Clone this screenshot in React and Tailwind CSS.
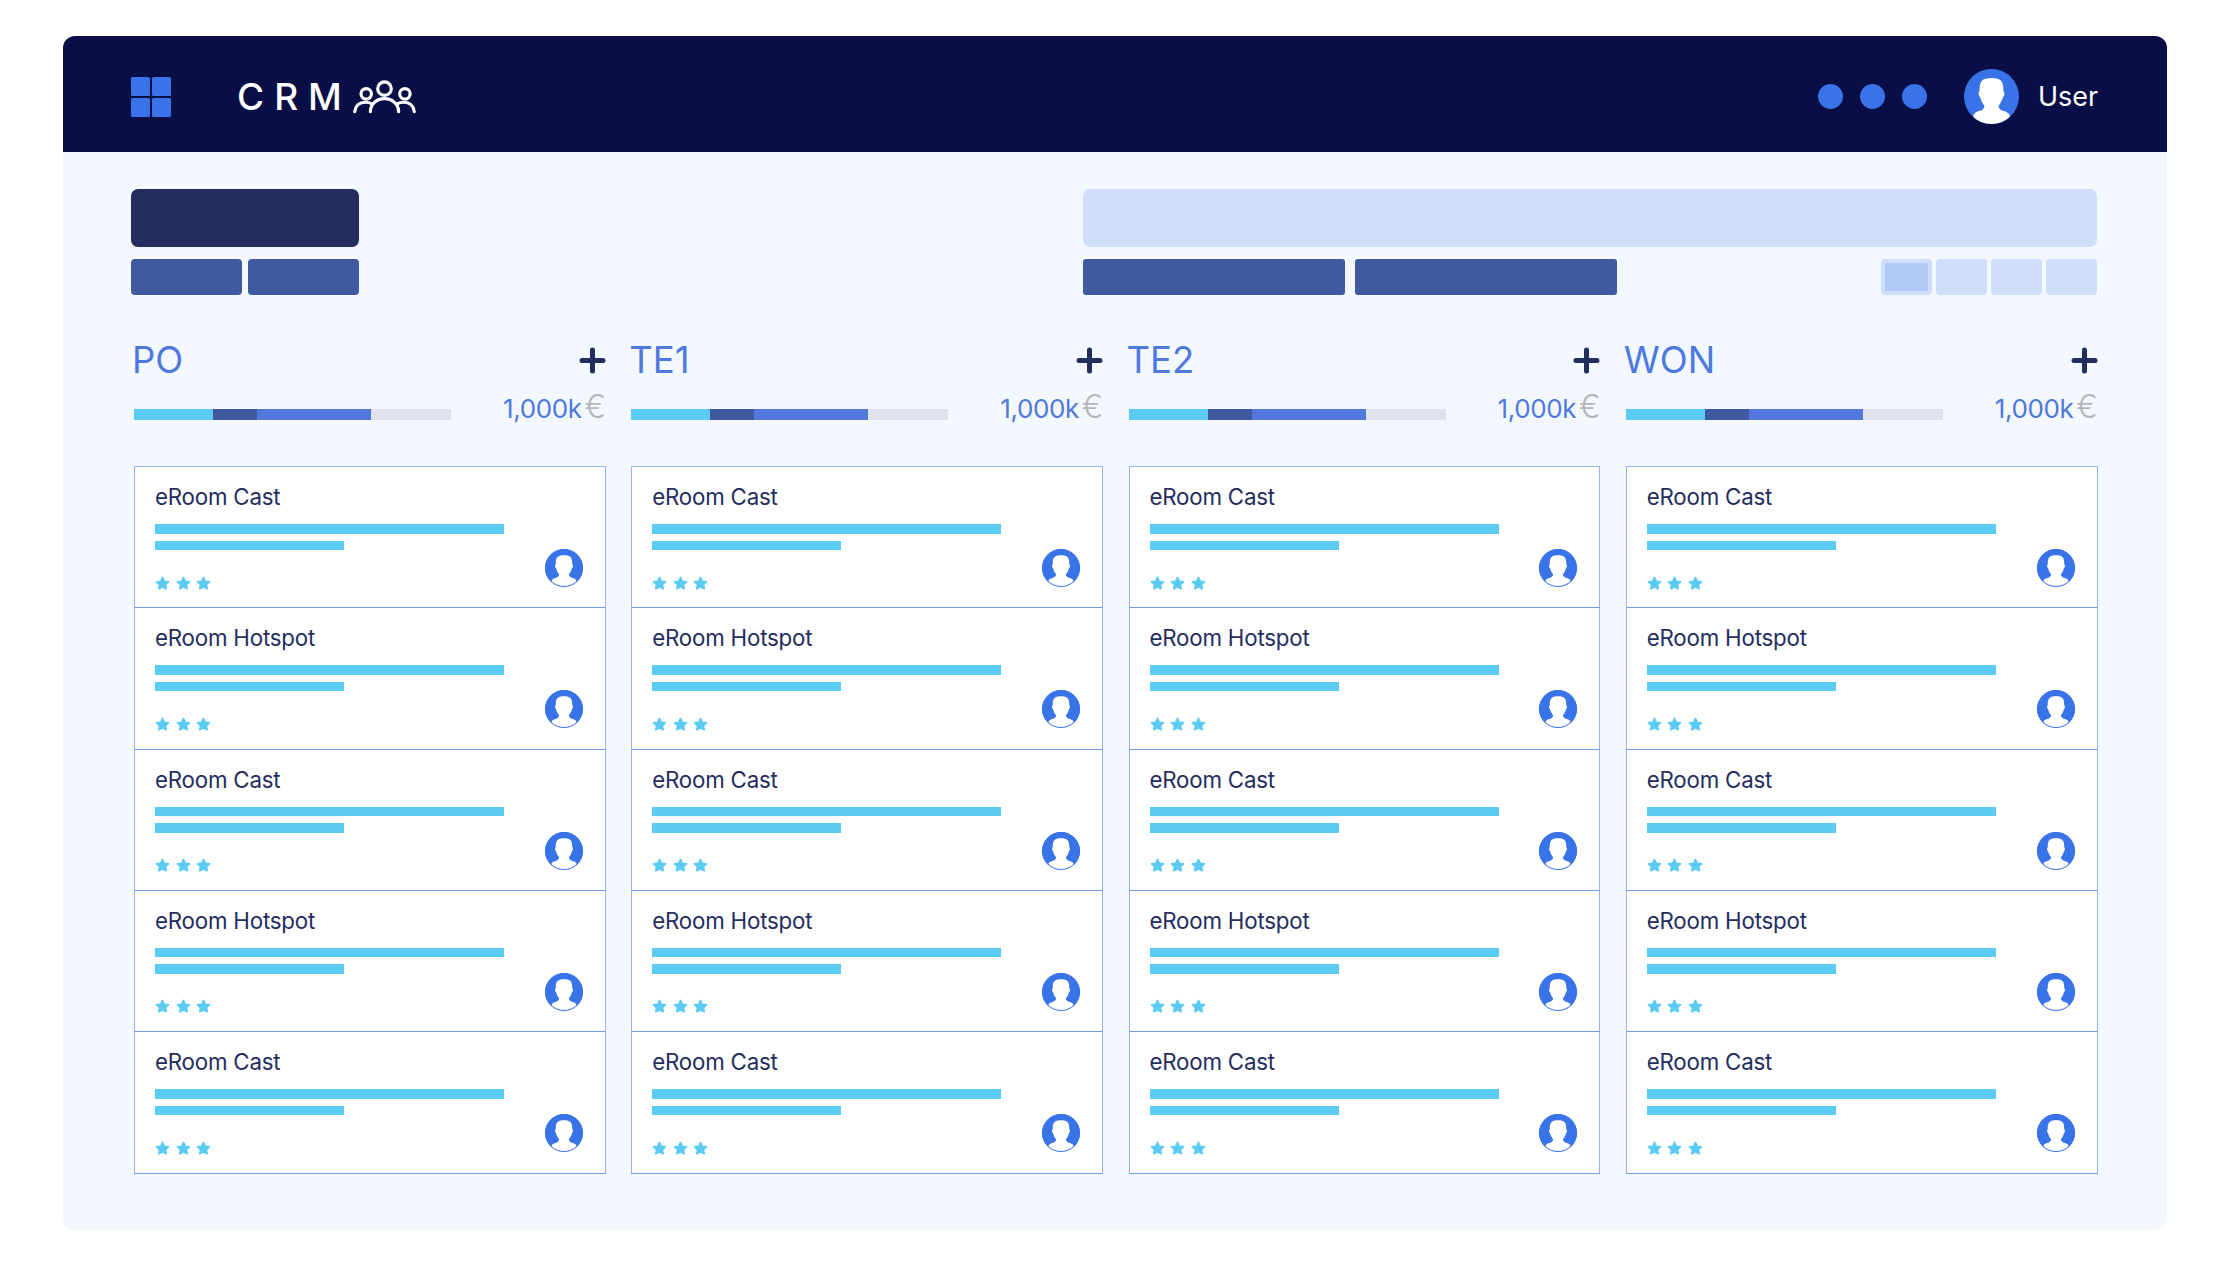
const FONT = "font-['Inter','Liberation_Sans',sans-serif]";

function Avatar({ size }) {
  return (
    <svg width={size} height={size} viewBox="0 0 55 55" className="shrink-0 block">
      <defs>
        <clipPath id={`av${size}`}><circle cx="27.5" cy="27.5" r="27.5" /></clipPath>
      </defs>
      <circle cx="27.5" cy="27.5" r="27.5" fill="#3874e8" />
      <g clipPath={`url(#av${size})`} fill="#fff">
        <path d="M15.500 22C15.500 12 18 9 27.500 9C37 9 39.500 12 39.500 22C41 23 40.500 27 39 28C38 32 36 35 34.500 37C35 40 37 41.500 40 42C43 43 45 44 45.500 46L46 56H9L9.500 46C10 44 12 43 15 42C18 41.500 20 40 20.500 37C19 35 17 32 16 28C14.500 27 14 23 15.500 22Z" />
      </g>
      {size < 50 && <circle cx="27.5" cy="27.5" r="26.8" fill="none" stroke="#3874e8" strokeWidth="1.400" />}
    </svg>
  );
}

function People() {
  return (
    <svg width="69" height="38" viewBox="0 0 66 36" fill="none" stroke="#fff" strokeWidth="3" strokeLinecap="round" className="block">
      <circle cx="33" cy="10" r="6.500" />
      <circle cx="15.500" cy="15" r="5" />
      <circle cx="52.500" cy="15" r="5" />
      <path d="M19.500 32c0-7 6-12.500 13.500-12.500S46.500 25 46.500 32" />
      <path d="M4.500 32c.5-5 4-9 10.500-9 2 0 4 .5 6 1.500" />
      <path d="M61.500 32c-.5-5-4-9-10.500-9-2 0-4 .5-6 1.500" />
    </svg>
  );
}

function Star() {
  return (
    <svg width="15" height="14" viewBox="0 0 24 23" className="block" fill="#5bcbf3" stroke="#5bcbf3" strokeWidth="3" strokeLinejoin="round">
      <path d="M12 2.500l2.900 6.200 6.800.8-5 4.600 1.300 6.700-6-3.300-6 3.300 1.300-6.700-5-4.600 6.800-.8z" />
    </svg>
  );
}

function Card({ name, last }) {
  return (
    <div className={`relative h-[141.250px] bg-white pl-[20px] pt-[17px] border-x border-x-[#93b4f3] ${last ? "" : "border-b border-b-[#7399e6]"}`}>
      <div className="text-[22.300px] leading-[26px] text-[#232d5e] tracking-[-0.2px]">{name}</div>
      <div className="mt-[14px] h-[9.500px] w-[349px] bg-[#5bcbf3]" />
      <div className="mt-[7px] h-[9.500px] w-[189px] bg-[#5bcbf3]" />
      <div className="mt-[25.500px] flex gap-[5.500px]">
        <Star /><Star /><Star />
      </div>
      <div className="absolute right-[22px] top-[82px]"><Avatar size={38} /></div>
    </div>
  );
}

function Column({ title }) {
  const rows = ["eRoom Cast", "eRoom Hotspot", "eRoom Cast", "eRoom Hotspot", "eRoom Cast"];
  return (
    <div>
      <div className="flex items-center justify-between h-[36px]">
        <div className="text-[36.500px] leading-[36px] font-normal text-[#4f78de] -ml-[2px]">{title}</div>
        <svg width="27" height="27" viewBox="0 0 27 27" className="block" stroke="#232d5e" strokeWidth="5" strokeLinecap="round">
          <path d="M13.500 3v21M3 13.500h21" />
        </svg>
      </div>
      <div className="mt-[14px] flex items-start justify-between h-[30px]">
        <div className="mt-[17px] flex h-[10.500px] w-[317px] bg-[#dfe2e8]">
          <div className="w-[79px] bg-[#5bcbf3]" />
          <div className="w-[44px] bg-[#4059a1]" />
          <div className="w-[114px] bg-[#5278de]" />
        </div>
        <div className="text-[26px] leading-[30px] font-normal text-[#4f78de] tracking-[-0.4px] flex items-baseline">
          1,000k<span className="ml-[3px] text-[32px] font-light text-[#b4b6b8]">€</span>
        </div>
      </div>
      <div className="mt-[44px] border-t border-t-[#93b4f3] border-b border-b-[#7399e6]">
        {rows.map((r, i) => <Card key={i} name={r} last={i === 4} />)}
      </div>
    </div>
  );
}

export default function App() {
  return (
    <div className={`${FONT} bg-white w-[2229px] h-[1266px] pt-[36px] pl-[62.500px]`}>
      <div className="w-[2104px] h-[1194px] rounded-[12px] overflow-hidden bg-[#f3f8fe]">
        <header className="h-[116px] bg-[#0a0e46] flex items-center pt-[5px] px-[68.500px]">
          <div className="grid grid-cols-[19px_19px] gap-[2px]">
            <div className="h-[19px] rounded-[1.500px] bg-[#3874e8]" />
            <div className="h-[19px] rounded-[1.500px] bg-[#3874e8]" />
            <div className="h-[19px] rounded-[1.500px] bg-[#3874e8]" />
            <div className="h-[19px] rounded-[1.500px] bg-[#3874e8]" />
          </div>
          <div className="ml-[66px] text-[37px] leading-[40px] font-medium text-white tracking-[10px]">CRM</div>
          <div className="-ml-[2px]"><People /></div>
          <div className="ml-auto flex gap-[17px]">
            <div className="w-[25px] h-[25px] rounded-full bg-[#3874e8]" />
            <div className="w-[25px] h-[25px] rounded-full bg-[#3874e8]" />
            <div className="w-[25px] h-[25px] rounded-full bg-[#3874e8]" />
          </div>
          <div className="ml-[37px]"><Avatar size={55} /></div>
          <div className="ml-[19px] text-[27px] leading-[32px] text-white w-[60px]">User</div>
        </header>

        <div className="pt-[36.500px] pl-[68.500px] pr-[69.500px] flex justify-between">
          <div className="w-[228px]">
            <div className="h-[58px] rounded-[7px] bg-[#232d5e]" />
            <div className="mt-[12px] flex gap-[6px]">
              <div className="h-[36px] flex-1 rounded-[4px] bg-[#4059a1]" />
              <div className="h-[36px] flex-1 rounded-[4px] bg-[#4059a1]" />
            </div>
          </div>
          <div className="w-[1014px]">
            <div className="h-[58px] rounded-[7px] bg-[#cfdefb]" />
            <div className="mt-[12px] flex items-center">
              <div className="h-[36px] w-[262px] rounded-[3px] bg-[#4059a1]" />
              <div className="ml-[10px] h-[36px] w-[262px] rounded-[3px] bg-[#4059a1]" />
              <div className="ml-auto flex gap-[4px]">
                <div className="h-[36px] w-[51px] rounded-[4px] bg-[#cfdefb] p-[4px]">
                  <div className="h-full rounded-[2px] bg-[#b0c9f7]" />
                </div>
                <div className="h-[36px] w-[51px] rounded-[4px] bg-[#cfdefb]" />
                <div className="h-[36px] w-[51px] rounded-[4px] bg-[#cfdefb]" />
                <div className="h-[36px] w-[51px] rounded-[4px] bg-[#cfdefb]" />
              </div>
            </div>
          </div>
        </div>

        <div className="mt-[47.500px] pl-[71.500px] pr-[69px] grid grid-cols-4 gap-x-[25.500px]">
          <Column title="PO" />
          <Column title="TE1" />
          <Column title="TE2" />
          <Column title="WON" />
        </div>
      </div>
    </div>
  );
}
